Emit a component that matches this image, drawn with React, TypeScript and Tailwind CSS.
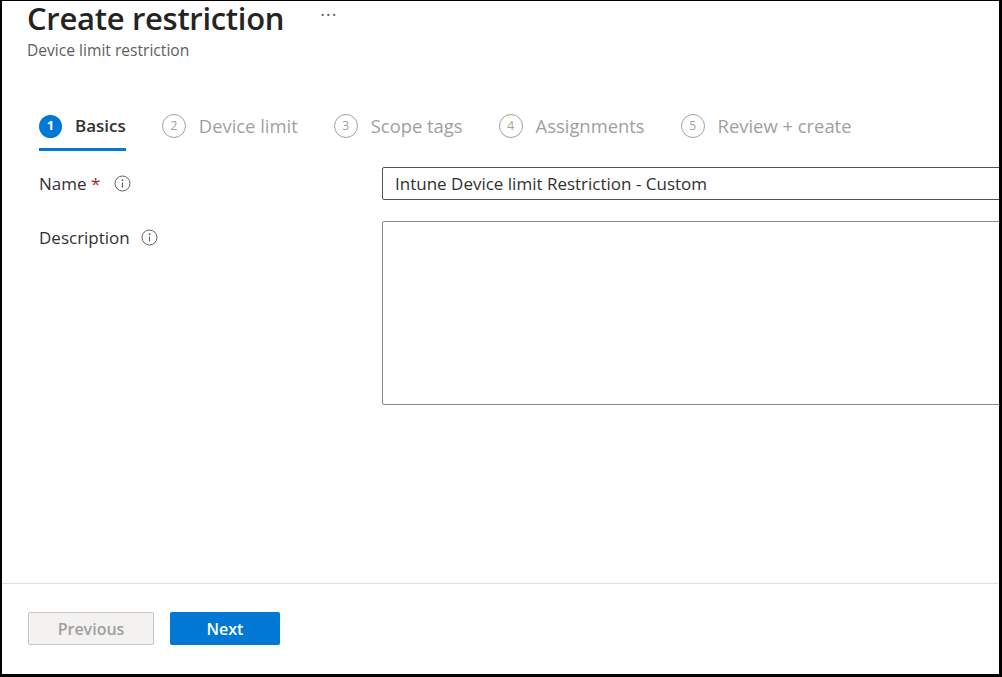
const steps = [
  { n: 1, label: "Basics", active: true },
  { n: 2, label: "Device limit" },
  { n: 3, label: "Scope tags" },
  { n: 4, label: "Assignments" },
  { n: 5, label: "Review + create" },
];

const InfoIcon = () => (
  <svg width="17" height="17" viewBox="0 0 17 17" className="shrink-0">
    <circle cx="8.5" cy="8.5" r="7.5" fill="none" stroke="#605e5c" strokeWidth="1" />
    <circle cx="8.5" cy="5.2" r="0.9" fill="#605e5c" />
    <line x1="8.5" y1="7.4" x2="8.5" y2="12.4" stroke="#605e5c" strokeWidth="1.1" />
  </svg>
);

const App = () => {
  return (
    <div
      className="w-[1002px] h-[677px] bg-white border-black border-t border-l-2 border-r-[3px] border-b-[3px] flex flex-col overflow-hidden text-[#323130]"
      style={{ fontFamily: '"Open Sans", "Noto Sans", sans-serif' }}
    >
      {/* Header */}
      <div className="pl-[25px]">
        <div className="flex items-center gap-[36px]">
          <h1 className="text-[31px] leading-[34px] font-semibold text-[#252423] tracking-[-0.3px]">
            Create restriction
          </h1>
          <span className="text-[18px] leading-none text-[#605e5c] -mt-[8px] tracking-[1px]">···</span>
        </div>
        <p className="text-[15.6px] leading-[20px] text-[#605e5c] mt-[5px]">Device limit restriction</p>
      </div>

      {/* Wizard steps */}
      <div className="flex items-center gap-[36px] pl-[37px] mt-[48px]">
        {steps.map((s) => (
          <div
            key={s.n}
            className={
              s.active
                ? "flex items-center gap-[13px] pb-[10px] border-b-[3px] border-[#0078d4] pt-[6px]"
                : "flex items-center gap-[13px] pb-[13px] pt-[6px]"
            }
          >
            {s.active ? (
              <span className="w-[23px] h-[23px] rounded-full bg-[#0078d4] text-white text-[13px] font-bold flex items-center justify-center">
                {s.n}
              </span>
            ) : (
              <span className="w-[24px] h-[24px] rounded-full border border-[#a19f9d] text-[#a19f9d] text-[12px] flex items-center justify-center">
                {s.n}
              </span>
            )}
            <span
              className={
                s.active
                  ? "text-[17px] leading-[22px] font-semibold text-[#323130]"
                  : "text-[18.4px] leading-[22px] text-[#a19f9d]"
              }
            >
              {s.label}
            </span>
          </div>
        ))}
      </div>

      {/* Form */}
      <div className="grid grid-cols-[343px_640px] gap-y-[21px] pl-[37px] mt-[16px]">
        <div className="flex items-center h-[33px] gap-[14px]">
          <span className="text-[17px]">
            Name <span className="text-[#a4262c]">*</span>
          </span>
          <InfoIcon />
        </div>
        <div className="h-[33px] border border-[#5e4a5e] rounded-[2px] flex items-center px-[12px] text-[17px] text-[#323130]">
          Intune Device limit Restriction - Custom
        </div>

        <div className="h-[184px]">
          <div className="flex items-center h-[33px] gap-[11px]">
            <span className="text-[17px]">Description</span>
            <InfoIcon />
          </div>
        </div>
        <div className="h-[184px] border border-[#8a8886] rounded-[2px]"></div>
      </div>

      <div className="flex-1" />

      {/* Footer */}
      <div className="border-t border-[#e1dfdd] h-[91px] flex items-start gap-[16px] pl-[26px] pt-[28px]">
        <button className="w-[126px] h-[33px] rounded-[2px] border border-[#c8c6c4] bg-[#f3f2f1] text-[#a19f9d] text-[16px] font-semibold">
          Previous
        </button>
        <button className="w-[110px] h-[33px] rounded-[2px] bg-[#0078d4] text-white text-[16px] font-semibold">
          Next
        </button>
      </div>
    </div>
  );
};

export default App;
